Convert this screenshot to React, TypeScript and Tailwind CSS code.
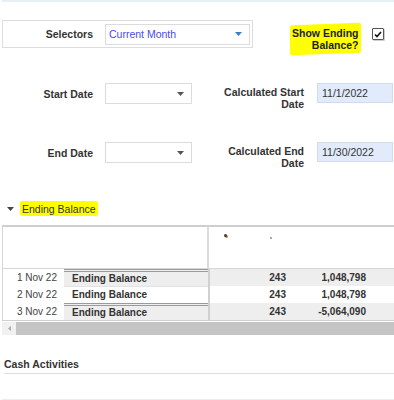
const rows = [
  { date: "1 Nov 22", count: "243", value: "1,048,798", shaded: true },
  { date: "2 Nov 22", count: "243", value: "1,048,798", shaded: false },
  { date: "3 Nov 22", count: "243", value: "-5,064,090", shaded: true },
];

function Caret({ color }: { color: string }) {
  return (
    <svg width="7" height="4" viewBox="0 0 7 4" className="shrink-0">
      <path d="M0 0 L7 0 L3.5 4 Z" fill={color} />
    </svg>
  );
}

function Dropdown({ width, children, arrow }: { width: string; children?: React.ReactNode; arrow: string }) {
  return (
    <div className={`${width} h-[21px] border border-[#dcdcdc] bg-white flex items-center pl-[3px] pr-[7px]`}>
      <span className="flex-1 text-[#4a4af0]">{children}</span>
      <Caret color={arrow} />
    </div>
  );
}

function DateField({ value }: { value: string }) {
  return (
    <div className="ml-[13px] w-[76px] h-[20px] border border-[#d2dbe8] bg-[#e1ebfb] flex items-center pl-[4px] text-[#333]">
      {value}
    </div>
  );
}

function DateRow({ label, calcLabel, value }: { label: string; calcLabel: string; value: string }) {
  return (
    <div className="flex items-start h-[59px]">
      <div className="flex items-center">
        <div className="ml-[2px] w-[91px] text-right font-bold text-[#333]">{label}</div>
        <div className="ml-[12px]">
          <Dropdown width="w-[87px]" arrow="#555" />
        </div>
      </div>
      <div className="w-[112px] mt-[3px] text-right font-bold text-[#333] leading-[12px]">
        {calcLabel}
        <br />
        Date
      </div>
      <DateField value={value} />
    </div>
  );
}

export default function App() {
  return (
    <div className="w-[394px] h-[400px] overflow-hidden bg-white text-[10.5px] leading-[12px] text-[#333] font-['Liberation_Sans',Arial,sans-serif]">
      <div className="ml-[2px] h-[2px] bg-[#e6eef6]" />

      {/* selectors */}
      <div className="mt-[18px] h-[63px] flex items-start">
        <div className="ml-[2px] w-[251px] h-[28px] border border-[#dddddd] flex items-center">
          <div className="w-[90px] text-right font-bold">Selectors</div>
          <div className="ml-[12px]">
            <Dropdown width="w-[145px]" arrow="#3d7cc9">Current Month</Dropdown>
          </div>
        </div>
        <div className="ml-[37px] mt-[4px] px-[2px] py-[3px] bg-[#ffff00] rounded-[2px] text-right font-bold text-[#222] -skew-y-2">
          <div className="skew-y-2">
            Show Ending
            <br />
            Balance?
          </div>
        </div>
        <div className="ml-[11px] mt-[8px] w-[12px] h-[12px] border border-[#555] rounded-[1px] bg-white flex items-center justify-center shadow-[1px_1px_0_#ccc]">
          <svg width="8" height="7" viewBox="0 0 8 7">
            <path d="M1 3.5 L3 5.5 L7 1" stroke="#111" strokeWidth="1.6" fill="none" />
          </svg>
        </div>
      </div>

      <DateRow label="Start Date" calcLabel="Calculated Start" value="11/1/2022" />
      <DateRow label="End Date" calcLabel="Calculated End" value="11/30/2022" />

      {/* ending balance heading */}
      <div className="h-[15px] flex items-center">
        <div className="ml-[7px]">
          <Caret color="#444" />
        </div>
        <div className="ml-[6px] px-[2px] h-[15px] flex items-center bg-[#ffff00] rounded-[2px]">Ending Balance</div>
      </div>

      {/* table */}
      <div className="mt-[9px] ml-[2px] w-[392px]">
        <div className="h-[2px] bg-[#cfcfcf]" />
        <div className="h-[42px] flex border-l border-b border-[#d6d6d6]">
          <div className="w-[204px]" />
          <div className="w-[2px] bg-[#dcdcdc]" />
          <div className="flex-1 flex items-start">
            <span className="ml-[15px] mt-[7px] w-[3px] h-[3px] rounded-full bg-[#3a3a4a] shadow-[1px_1px_0_#c98a3a]" />
            <span className="ml-[43px] mt-[10px] w-[2px] h-[2px] bg-[#aaaaaa]" />
          </div>
        </div>
        {rows.map((r) => (
          <div key={r.date} className="flex h-[17px] font-bold text-[10px]">
            <div className="w-[62px] border-l border-l-[#d6d6d6] bg-white flex items-center justify-end pr-[7px] font-normal text-[#444]">
              {r.date}
            </div>
            <div
              className={`w-[144px] flex items-center pl-[8px] ${
                r.shaded ? "bg-[#eeeeee] border-t-[3px] border-double border-[#9a9a9a]" : "bg-white border-t border-[#e2e2e2]"
              }`}
            >
              Ending Balance
            </div>
            <div className={`flex-1 flex items-center border-l-2 border-l-[#d0d0d0] ${r.shaded ? "bg-[#eeeeee]" : "bg-white"}`}>
              <div className="w-[81px] text-right pr-[5px]">{r.count}</div>
              <div className="w-[79px] text-right pr-[4px]">{r.value}</div>
            </div>
          </div>
        ))}
        <div className="h-[1px] bg-[#d0d0d0]" />
        <div className="mt-[1px] h-[13px] flex">
          <div className="w-[14px] bg-[#f1f1f1] flex items-center justify-center">
            <svg width="3" height="5" viewBox="0 0 3 5">
              <path d="M3 0 L0 2.5 L3 5 Z" fill="#aaa" />
            </svg>
          </div>
          <div className="flex-1 bg-[#c4c4c4]" />
        </div>
      </div>

      {/* cash activities */}
      <div className="mt-[23px] ml-[4px] pb-[3px] border-b border-[#dddddd] font-bold">Cash Activities</div>
      <div className="mt-[25px] ml-[2px] h-[2px] bg-[#e6eef6]" />
    </div>
  );
}
